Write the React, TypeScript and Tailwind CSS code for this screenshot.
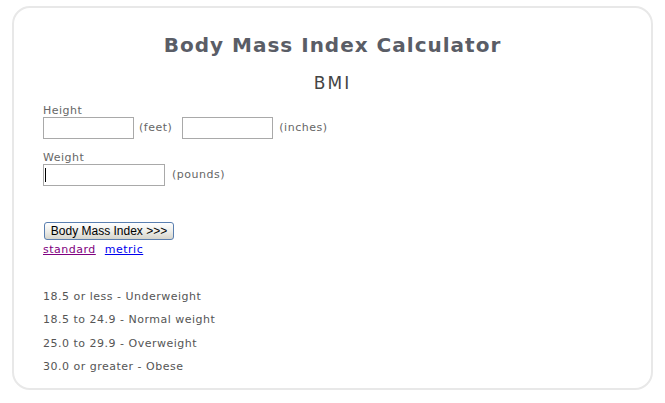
import { useState } from 'react';

const ranges = [
  '18.5 or less - Underweight',
  '18.5 to 24.9 - Normal weight',
  '25.0 to 29.9 - Overweight',
  '30.0 or greater - Obese',
];

const App = () => {
  const [feet, setFeet] = useState('');
  const [inches, setInches] = useState('');
  const [pounds, setPounds] = useState('');

  return (
    <div className="w-[665px] h-[403px] bg-white pt-[6px] px-[12px] font-['DejaVu_Sans',sans-serif]">
      <div className="h-[384px] border-2 border-[#e8e8e8] rounded-[18px] px-[29px] pt-[25px]">
        <h1 className="text-center text-[20px] leading-[25px] tracking-[1px] font-bold text-[#5a5d66]">
          Body Mass Index Calculator
        </h1>
        <div className="mt-[15px] text-center text-[17px] leading-[21px] tracking-[2px] text-[#444]">BMI</div>

        {/* height */}
        <div className="mt-[10px] text-[11px] leading-[13px] tracking-[0.5px] text-[#666]">Height</div>
        <div className="flex items-center text-[11px] tracking-[0.5px] text-[#666]">
          <input
            value={feet}
            onChange={(e) => setFeet(e.target.value)}
            className="w-[91px] h-[22px] border border-[#a9a9a9] outline-none px-1"
          />
          <span className="ml-[5px]">(feet)</span>
          <input
            value={inches}
            onChange={(e) => setInches(e.target.value)}
            className="ml-[10px] w-[91px] h-[22px] border border-[#a9a9a9] outline-none px-1"
          />
          <span className="ml-[6px]">(inches)</span>
        </div>

        {/* weight */}
        <div className="mt-[12px] text-[11px] leading-[13px] tracking-[0.5px] text-[#666]">Weight</div>
        <div className="flex items-center text-[11px] tracking-[0.5px] text-[#666]">
          <div className="relative">
            <input
              value={pounds}
              onChange={(e) => setPounds(e.target.value)}
              className="w-[122px] h-[22px] border border-[#a9a9a9] outline-none px-1"
            />
            {pounds === '' && (
              <span className="absolute left-[2px] top-[4px] w-px h-[14px] bg-black" />
            )}
          </div>
          <span className="ml-[7px]">(pounds)</span>
        </div>

        <button className="mt-[36px] ml-px w-[130px] h-[18px] rounded-[3px] border border-[#5a7fb0] bg-gradient-to-b from-white via-[#eeeeea] to-[#d6d5cc] font-['Liberation_Sans',sans-serif] text-[12px] leading-[16px] text-black">
          Body Mass Index &gt;&gt;&gt;
        </button>
        <div className="mt-px flex gap-[9px] text-[11px] leading-[13px] tracking-[0.5px]">
          <a href="#" className="text-[#800080] underline">standard</a>
          <a href="#" className="text-[#0000ee] underline">metric</a>
        </div>

        <div className="mt-[29px] text-[11px] leading-[23.4px] tracking-[0.5px] text-[#555]">
          {ranges.map((r) => (
            <div key={r}>{r}</div>
          ))}
        </div>
      </div>
    </div>
  );
};

export default App;
